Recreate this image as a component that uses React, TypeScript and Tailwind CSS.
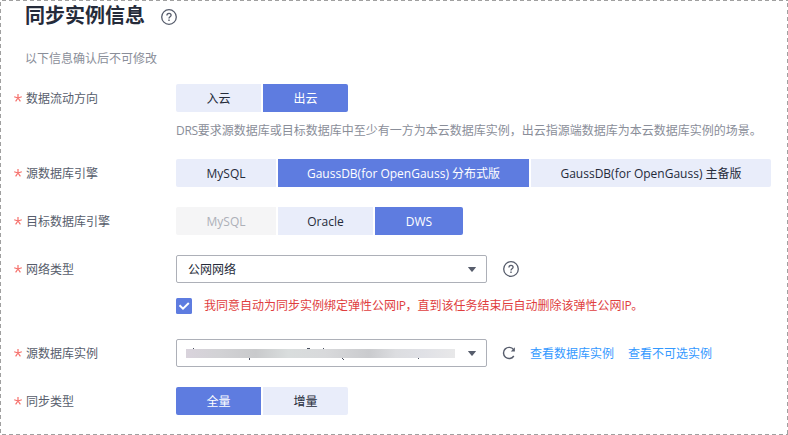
import type { ReactNode } from "react";

type Option = { label: string; width: string; state?: "active" | "disabled" };

function HelpIcon({ className = "" }: { className?: string }) {
  return (
    <svg width="16" height="16" viewBox="0 0 16 16" fill="none" stroke="#575d6c" className={className}>
      <circle cx="8" cy="8" r="7.3" strokeWidth="1.3" />
      <path d="M5.9 6.5C5.9 5.1 6.8 4.3 8 4.3s2.1.8 2.1 1.9c0 1.5-2.1 1.6-2.1 3.2" strokeWidth="1.3" />
      <path d="M8 10.6v1.4" strokeWidth="1.4" />
    </svg>
  );
}

function Segments({ options }: { options: Option[] }) {
  return (
    <div className="flex h-7 gap-0.5 overflow-hidden rounded-xs">
      {options.map((o) => (
        <button
          key={o.label}
          className={`${o.width} h-7 pt-0.5 whitespace-nowrap text-center ${
            o.state === "active"
              ? "bg-[#5e7ce0] text-white"
              : o.state === "disabled"
                ? "bg-[#f5f5f6] text-[#adb0b8]"
                : "bg-[#e9edfa] text-[#252b3a]"
          }`}
        >
          {o.label}
        </button>
      ))}
    </div>
  );
}

function Row({ label, className = "", children }: { label: string; className?: string; children: ReactNode }) {
  return (
    <div className={`flex h-7 items-center ${className}`}>
      <div className="flex w-[163px] shrink-0 items-center">
        <svg width="10" height="10" viewBox="0 0 10 10" stroke="#f66f6a" strokeWidth="1.2" className="mr-[3px]">
          <path d="M5 5V1M5 5 1.2 3.8M5 5l3.8-1.2M5 5 2.6 8.3M5 5l2.4 3.3" />
        </svg>
        <span className="pt-0.5 text-[#575d6c]">{label}</span>
      </div>
      {children}
    </div>
  );
}

function SelectBox({ children }: { children: ReactNode }) {
  return (
    <div className="flex h-7 w-[311px] items-center justify-between rounded-xs border border-[#adb0b8] pr-2.5 text-[#252b3a]">
      {children}
      <svg width="8" height="5" viewBox="0 0 8 5" fill="#575d6c">
        <path d="M.4 0h7.2q.5 0 .2.5L4.5 4.6q-.5.6-1 0L.2.5Q-.1 0 .4 0Z" />
      </svg>
    </div>
  );
}

/* Blurred instance name: only stray ascenders and descenders stay visible. */
function MaskedName() {
  return (
    <svg width="269" height="13" viewBox="0 0 269 13" className="ml-[9px]">
      <defs>
        <linearGradient id="mask">
          <stop offset="0" stopColor="#d9d3dc" />
          <stop offset=".12" stopColor="#d2d2d5" />
          <stop offset=".26" stopColor="#c9cacc" />
          <stop offset=".38" stopColor="#d9dddd" />
          <stop offset=".52" stopColor="#d8d9db" />
          <stop offset=".68" stopColor="#cacbce" />
          <stop offset=".78" stopColor="#dcdde0" />
          <stop offset=".88" stopColor="#e0e1e6" />
          <stop offset="1" stopColor="#e8e8e9" />
        </linearGradient>
      </defs>
      <rect y="2" width="269" height="9" fill="url(#mask)" />
      <path d="M7 1h1v1H7zM121 1h3v1h-3zM137 1h1v1h-1zM63 11h1v2h-1zM156 11h1v1h-1zM157 12h1v1h-1zM232 11h1v1h-1z" fill="#4c5262" />
    </svg>
  );
}

export default function App() {
  return (
    <div className="relative h-[435px] w-[788px] overflow-hidden bg-white pl-[13px] font-['Open_Sans','Noto_Sans_CJK_SC',sans-serif] text-xs leading-[18px]">
      <svg className="pointer-events-none absolute inset-0" width="788" height="435" fill="none" stroke="#a0a0a0" strokeDasharray="4 3">
        <path d="M2 .5h786M2 434.5h786M.5 2v433M787.5 3v432" />
      </svg>
      <header className="flex h-8 items-center pl-3">
        <h1 className="text-xl leading-8 font-bold text-[#252b3a]">同步实例信息</h1>
        <HelpIcon className="ml-4 mt-0.5" />
      </header>
      <p className="mt-[18px] pl-3 text-[#8a8e99]">以下信息确认后不可修改</p>

      <Row label="数据流动方向" className="mt-4">
        <Segments
          options={[
            { label: "入云", width: "w-[85px]" },
            { label: "出云", width: "w-[85px]", state: "active" },
          ]}
        />
      </Row>
      <p className="mt-2.5 pl-[163px] text-[#8a8e99]">
        <span className="tracking-[-0.3px]">DRS</span>
        要求源数据库或目标数据库中至少有一方为本云数据库实例，出云指源端数据库为本云数据库实例的场景。
      </p>

      <Row label="源数据库引擎" className="mt-[19px]">
        <Segments
          options={[
            { label: "MySQL", width: "w-[100px]" },
            { label: "GaussDB(for OpenGauss) 分布式版", width: "w-[251px]", state: "active" },
            { label: "GaussDB(for OpenGauss) 主备版", width: "w-[240px]" },
          ]}
        />
      </Row>

      <Row label="目标数据库引擎" className="mt-5">
        <Segments
          options={[
            { label: "MySQL", width: "w-[100px]", state: "disabled" },
            { label: "Oracle", width: "w-[95px]" },
            { label: "DWS", width: "w-[88px]", state: "active" },
          ]}
        />
      </Row>

      <Row label="网络类型" className="mt-5">
        <SelectBox>
          <span className="pt-0.5 pl-[11px]">公网网络</span>
        </SelectBox>
        <HelpIcon className="ml-4" />
      </Row>
      <div className="mt-3.5 flex h-[18px] items-center pl-[163px]">
        <svg width="16" height="16" viewBox="0 0 16 16" fill="none">
          <rect width="16" height="16" rx="1.5" fill="#5e7ce0" />
          <path d="m3.5 7.2 3.5 3.4 5.8-5.6" stroke="white" strokeWidth="2" />
        </svg>
        <span className="ml-3 text-[#e03e3e]">
          我同意自动为同步实例绑定弹性公网<span className="tracking-[-0.5px]">IP</span>
          ，直到该任务结束后自动删除该弹性公网<span className="tracking-[-0.5px]">IP</span>。
        </span>
      </div>

      <Row label="源数据库实例" className="mt-6">
        <SelectBox>
          <MaskedName />
        </SelectBox>
        <svg width="14" height="14" viewBox="0 0 14 14" fill="none" stroke="#575d6c" strokeWidth="1.4" className="ml-[15px]">
          <path d="M11.8 10A5.6 5.6 0 1 1 11.6 3.6" />
          <path d="M12.9 1.2v4.2H8.8Z" fill="#575d6c" stroke="none" />
        </svg>
        <a className="ml-3.5 pt-px text-[#3399ff]">查看数据库实例</a>
        <a className="ml-3.5 pt-px text-[#3399ff]">查看不可选实例</a>
      </Row>

      <Row label="同步类型" className="mt-5">
        <Segments
          options={[
            { label: "全量", width: "w-[85px]", state: "active" },
            { label: "增量", width: "w-[85px]" },
          ]}
        />
      </Row>
    </div>
  );
}
